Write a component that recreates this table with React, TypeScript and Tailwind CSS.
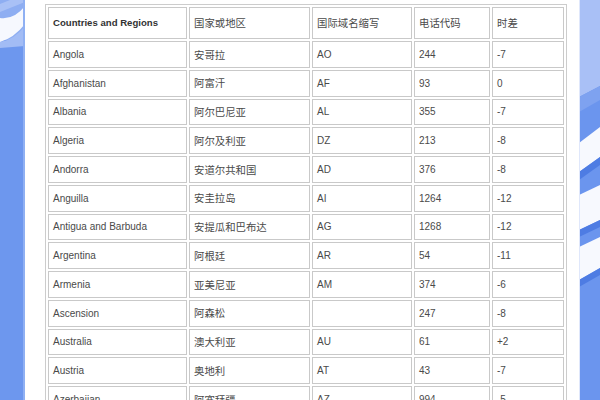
import React from "react";

const rows: [string, string, string, string, string][] = [
  ["Angola", "安哥拉", "AO", "244", "-7"],
  ["Afghanistan", "阿富汗", "AF", "93", "0"],
  ["Albania", "阿尔巴尼亚", "AL", "355", "-7"],
  ["Algeria", "阿尔及利亚", "DZ", "213", "-8"],
  ["Andorra", "安道尔共和国", "AD", "376", "-8"],
  ["Anguilla", "安圭拉岛", "AI", "1264", "-12"],
  ["Antigua and Barbuda", "安提瓜和巴布达", "AG", "1268", "-12"],
  ["Argentina", "阿根廷", "AR", "54", "-11"],
  ["Armenia", "亚美尼亚", "AM", "374", "-6"],
  ["Ascension", "阿森松", "", "247", "-8"],
  ["Australia", "澳大利亚", "AU", "61", "+2"],
  ["Austria", "奥地利", "AT", "43", "-7"],
  ["Azerbaijan", "阿塞拜疆", "AZ", "994", "-5"],
];

function LeftStrip() {
  return (
    <svg width="25" height="400" viewBox="0 0 25 400" className="block shrink-0">
      <rect x="0" y="0" width="25" height="400" fill="#6d97ee" />
      <rect x="0" y="0" width="25" height="40" fill="#8eaef2" />
      <path d="M0,4 L25,-6 L25,2 L0,12 Z" fill="#a9c1f6" />
      <path d="M0,42 Q14,40 25,26 L25,46 L0,48 Z" fill="#a2bcf5" />
      <path d="M0,18 Q14,20 25,6 L25,24 Q14,38 0,42 Z" fill="#f6f8fe" />
      <rect x="23" y="0" width="2" height="400" fill="#8fb0f3" />
    </svg>
  );
}

function RightStrip() {
  return (
    <svg width="21" height="400" viewBox="0 0 21 400" className="block shrink-0">
      <rect x="0" y="0" width="21" height="400" fill="#6b95ee" />
      <path d="M0,0 L21,0 L21,86 L0,97 Z" fill="#a9c0f6" />
      <path d="M0,97 L21,86 L21,100 L0,112 Z" fill="#7ea2f0" />
      <path d="M0,143 L21,127 L21,157 L0,172 Z" fill="#f7f9fe" />
      <path d="M0,172 L21,157 L21,165 L0,180 Z" fill="#4e7ce3" />
      <path d="M0,195 L21,185 L21,220 L0,230 Z" fill="#f7f9fe" />
      <path d="M0,230 L21,220 L21,227 L0,237 Z" fill="#4e7ce3" />
      <path d="M0,247 L21,237 L21,268 L0,280 Z" fill="#f7f9fe" />
      <path d="M0,280 L21,268 L21,275 L0,287 Z" fill="#4e7ce3" />
      <rect x="0" y="0" width="1" height="400" fill="#dfe7fb" />
    </svg>
  );
}

const latin = "font-['Liberation_Sans','Noto_Sans_CJK_SC',sans-serif]";
const cjk = "font-['Noto_Sans_CJK_SC','Liberation_Sans',sans-serif]";

export default function App() {
  const td = "border border-[#c9c9c9] pl-[4px] pr-[2px] align-middle text-[#4a4a4a] whitespace-nowrap";
  return (
    <div className="w-[600px] h-[400px] overflow-hidden flex bg-white">
      <LeftStrip />
      <div className="flex-1 bg-white pl-[20px] pt-[4px] overflow-hidden">
        <table className={`border-separate border-spacing-[2px] border border-[#cccccc] w-[522px] table-fixed ${latin}`}>
          <colgroup>
            <col className="w-[139px]" />
            <col className="w-[121px]" />
            <col className="w-[100px]" />
            <col className="w-[76px]" />
            <col className="w-[72px]" />
          </colgroup>
          <tbody>
            <tr className="h-[32px]">
              <td className={`${td} text-[9.6px] font-bold text-[#333333]`}>Countries and Regions</td>
              <td className={`${td} text-[10.4px] ${cjk}`}>国家或地区</td>
              <td className={`${td} text-[10.4px] ${cjk}`}>国际域名缩写</td>
              <td className={`${td} text-[10.4px] ${cjk}`}>电话代码</td>
              <td className={`${td} text-[10.4px] ${cjk}`}>时差</td>
            </tr>
            {rows.map((r, i) => (
              <tr key={i} className="h-[26.75px]">
                <td className={`${td} text-[10px]`}>{r[0]}</td>
                <td className={`${td} text-[10.4px] ${cjk}`}>{r[1]}</td>
                <td className={`${td} text-[10px]`}>{r[2]}</td>
                <td className={`${td} text-[10px]`}>{r[3]}</td>
                <td className={`${td} text-[10px]`}>{r[4]}</td>
              </tr>
            ))}
          </tbody>
        </table>
      </div>
      <RightStrip />
    </div>
  );
}
